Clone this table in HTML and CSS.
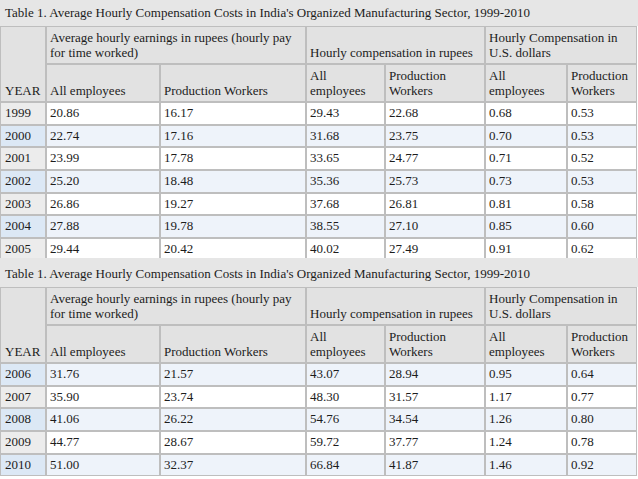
FILE: index.html
```html
<!DOCTYPE html>
<html>
<head>
<meta charset="utf-8">
<link rel="stylesheet" href="styles.css">
</head>
<body>
<section class="part part-first">
  <div class="caption">Table 1. Average Hourly Compensation Costs in India's Organized Manufacturing Sector, 1999-2010</div>
  <table class="data">
    <colgroup>
      <col class="c1"><col class="c2"><col class="c3"><col class="c4"><col class="c5"><col class="c6"><col class="c7">
    </colgroup>
    <thead>
      <tr>
        <th rowspan="2" class="year-h">YEAR</th>
        <th colspan="2">Average hourly earnings in rupees (hourly pay for time worked)</th>
        <th colspan="2">Hourly compensation in rupees</th>
        <th colspan="2">Hourly Compensation in U.S. dollars</th>
      </tr>
      <tr>
        <th>All employees</th>
        <th>Production Workers</th>
        <th>All employees</th>
        <th>Production Workers</th>
        <th>All employees</th>
        <th>Production Workers</th>
      </tr>
    </thead>
    <tbody>
      <tr class="odd"><td class="yr">1999</td><td>20.86</td><td>16.17</td><td>29.43</td><td>22.68</td><td>0.68</td><td>0.53</td></tr>
      <tr class="even"><td class="yr">2000</td><td>22.74</td><td>17.16</td><td>31.68</td><td>23.75</td><td>0.70</td><td>0.53</td></tr>
      <tr class="odd"><td class="yr">2001</td><td>23.99</td><td>17.78</td><td>33.65</td><td>24.77</td><td>0.71</td><td>0.52</td></tr>
      <tr class="even"><td class="yr">2002</td><td>25.20</td><td>18.48</td><td>35.36</td><td>25.73</td><td>0.73</td><td>0.53</td></tr>
      <tr class="odd"><td class="yr">2003</td><td>26.86</td><td>19.27</td><td>37.68</td><td>26.81</td><td>0.81</td><td>0.58</td></tr>
      <tr class="even"><td class="yr">2004</td><td>27.88</td><td>19.78</td><td>38.55</td><td>27.10</td><td>0.85</td><td>0.60</td></tr>
      <tr class="odd"><td class="yr">2005</td><td>29.44</td><td>20.42</td><td>40.02</td><td>27.49</td><td>0.91</td><td>0.62</td></tr>
    </tbody>
  </table>
</section>
<section class="part part-second">
  <div class="caption caption-second">Table 1. Average Hourly Compensation Costs in India's Organized Manufacturing Sector, 1999-2010</div>
  <table class="data">
    <colgroup>
      <col class="c1"><col class="c2"><col class="c3"><col class="c4"><col class="c5"><col class="c6"><col class="c7">
    </colgroup>
    <thead>
      <tr>
        <th rowspan="2" class="year-h">YEAR</th>
        <th colspan="2">Average hourly earnings in rupees (hourly pay for time worked)</th>
        <th colspan="2">Hourly compensation in rupees</th>
        <th colspan="2">Hourly Compensation in U.S. dollars</th>
      </tr>
      <tr>
        <th>All employees</th>
        <th>Production Workers</th>
        <th>All employees</th>
        <th>Production Workers</th>
        <th>All employees</th>
        <th>Production Workers</th>
      </tr>
    </thead>
    <tbody>
      <tr class="even"><td class="yr">2006</td><td>31.76</td><td>21.57</td><td>43.07</td><td>28.94</td><td>0.95</td><td>0.64</td></tr>
      <tr class="odd"><td class="yr">2007</td><td>35.90</td><td>23.74</td><td>48.30</td><td>31.57</td><td>1.17</td><td>0.77</td></tr>
      <tr class="even"><td class="yr">2008</td><td>41.06</td><td>26.22</td><td>54.76</td><td>34.54</td><td>1.26</td><td>0.80</td></tr>
      <tr class="odd"><td class="yr">2009</td><td>44.77</td><td>28.67</td><td>59.72</td><td>37.77</td><td>1.24</td><td>0.78</td></tr>
      <tr class="even"><td class="yr">2010</td><td>51.00</td><td>32.37</td><td>66.84</td><td>41.87</td><td>1.46</td><td>0.92</td></tr>
    </tbody>
  </table>
</section>
</body>
</html>
```
FILE: styles.css
```css
html, body {
  margin: 0;
  padding: 0;
  background: #ffffff;
}

body {
  font-family: "Liberation Serif", "Times New Roman", serif;
  font-size: 13px;
  color: #1c1c1c;
  width: 638px;
  overflow: hidden;
}

.part-first {
  height: 258px;
  overflow: hidden;
}

.caption {
  background: #e6e6e6;
  line-height: 15px;
  padding: 5px 5px 6px 5px;
  white-space: nowrap;
}

.caption-second {
  padding: 8px 5px 6px 5px;
}

.data {
  border-collapse: separate;
  border-spacing: 0;
  table-layout: fixed;
  width: 637px;
}

.c1 { width: 46px; }
.c2 { width: 114px; }
.c3 { width: 146px; }
.c4 { width: 79px; }
.c5 { width: 100px; }
.c6 { width: 82px; }
.c7 { width: 70px; }

.data th,
.data td {
  border: 1px solid #bebebe;
  text-align: left;
  font-weight: normal;
}

.data th {
  background: #e2e2e2;
  line-height: 15px;
  padding: 3px 3px 3px 3px;
  vertical-align: bottom;
}

.data th.year-h {
  padding-left: 4px;
}

.data td {
  line-height: 14.67px;
  padding: 3px 3px;
  vertical-align: middle;
}

.data td.yr {
  padding-left: 4px;
}

.odd td {
  background: #ffffff;
}

.odd td.yr {
  background: #ececec;
}

.even td {
  background: #eef3fa;
}

.even td.yr {
  background: #dce8f5;
}
```
